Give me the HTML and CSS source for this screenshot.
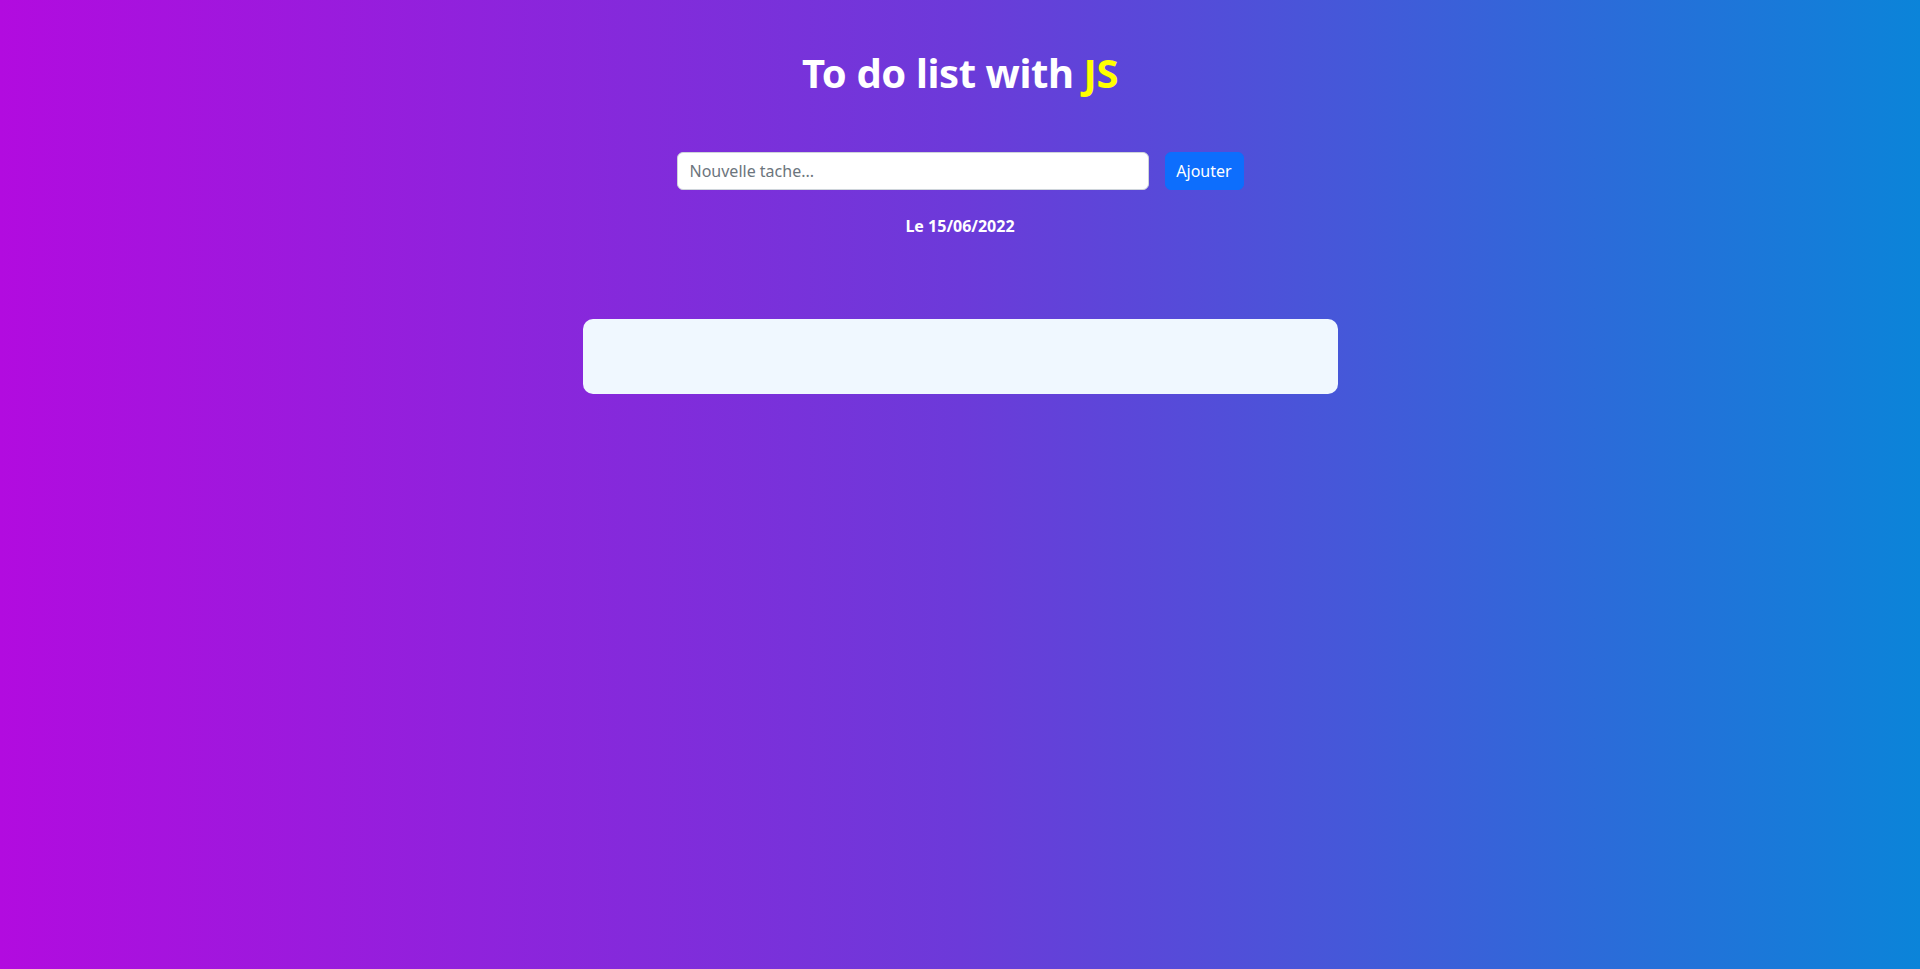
FILE: index.html
```html
<!DOCTYPE html>
<html lang="fr">
<head>
<meta charset="utf-8">
<title>To do list with JS</title>
<link rel="stylesheet" href="styles.css">
</head>
<body>
<main class="app">
  <h1 class="title">To do list with <span class="js">JS</span></h1>
  <form class="add-form" onsubmit="return false;">
    <input class="task-input" type="text" placeholder="Nouvelle tache...">
    <button class="add-btn" type="submit">Ajouter</button>
  </form>
  <p class="date">Le 15/06/2022</p>
  <ul class="task-list"></ul>
</main>
</body>
</html>
```

FILE: styles.css
```css
* { box-sizing: border-box; }
html, body {
  margin: 0;
  height: 100%;
}
body {
  font-family: "Noto Sans", "Open Sans", sans-serif;
  background: linear-gradient(to right, #b20bdf 0%, #6c3ad9 50%, #0b84d9 100%);
  color: #fff;
}
.app {
  display: flex;
  flex-direction: column;
  align-items: center;
  padding-top: 49px;
}
.title {
  margin: 0;
  font-size: 40px;
  line-height: 48px;
  font-weight: 700;
  letter-spacing: -0.4px;
}
.js { color: #ffff00; }
.add-form {
  display: flex;
  gap: 16px;
  margin-top: 55px;
}
.task-input {
  width: 472px;
  height: 38px;
  padding: 6px 12px;
  font-family: inherit;
  font-size: 16px;
  color: #212529;
  background: #fff;
  border: 1px solid #ced4da;
  border-radius: 6px;
  outline: none;
}
.task-input::placeholder { color: #6c757d; }
.add-btn {
  width: 79px;
  height: 38px;
  padding: 6px 0;
  font-family: inherit;
  font-size: 16px;
  color: #fff;
  background: #0d6efd;
  border: 1px solid #0d6efd;
  border-radius: 6px;
}
.date {
  margin: 24px 0 0;
  font-size: 16px;
  line-height: 24px;
  font-weight: 700;
}
.task-list {
  margin: 81px 0 0;
  padding: 0;
  list-style: none;
  width: 755px;
  height: 75px;
  background: #f0f8ff;
  border-radius: 10px;
}
```
